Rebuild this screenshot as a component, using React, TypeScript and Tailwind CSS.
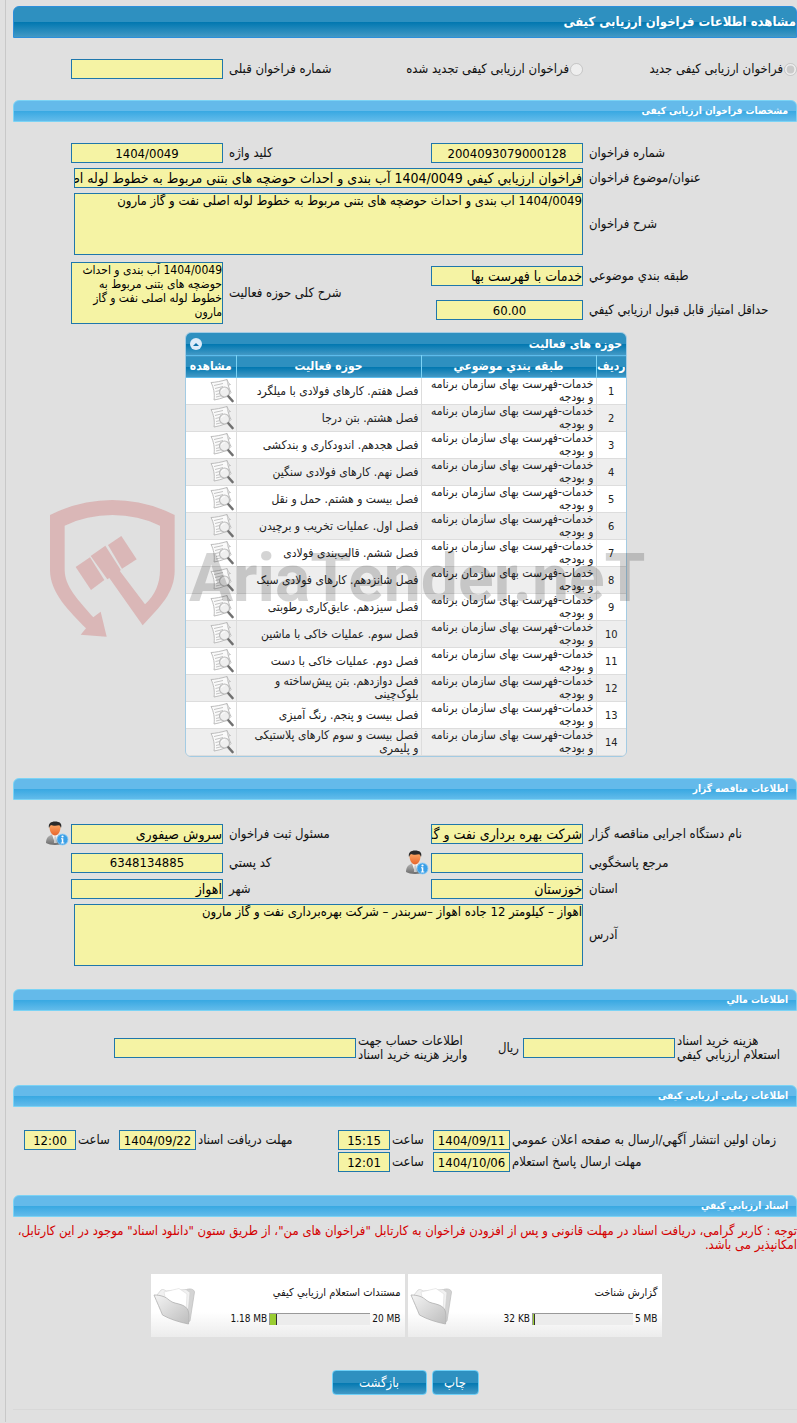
import React from 'react';

const TITLE_BG = 'bg-[linear-gradient(to_bottom,#2e90c0_0%,#2e90c0_50%,#0077b0_50%,#4399c5_100%)]';
const SECTION_BG = 'bg-[linear-gradient(to_bottom,#64baea_0%,#64baea_50%,#38a8e2_50%,#62bbea_100%)]';
const FIELD = 'block border border-[#1f77ab] bg-[#f5f3a4] text-black outline-none';

interface Activity {
  id: number;
  title: string;
}

const activities: Activity[] = [
  { id: 1, title: 'فصل هفتم. کارهای فولادی با میلگرد' },
  { id: 2, title: 'فصل هشتم. بتن درجا' },
  { id: 3, title: 'فصل هجدهم. اندودکاری و بندکشی' },
  { id: 4, title: 'فصل نهم. کارهای فولادی سنگین' },
  { id: 5, title: 'فصل بیست و هشتم. حمل و نقل' },
  { id: 6, title: 'فصل اول. عملیات تخریب و برچیدن' },
  { id: 7, title: 'فصل ششم. قالب‌بندی فولادی' },
  { id: 8, title: 'فصل شانزدهم. کارهای فولادی سبک' },
  { id: 9, title: 'فصل سیزدهم. عایق‌کاری رطوبتی' },
  { id: 10, title: 'فصل سوم. عملیات خاکی با ماشین' },
  { id: 11, title: 'فصل دوم. عملیات خاکی با دست' },
  { id: 12, title: 'فصل دوازدهم. بتن پیش‌ساخته و بلوک‌چینی' },
  { id: 13, title: 'فصل بیست و پنجم. رنگ آمیزی' },
  { id: 14, title: 'فصل بیست و سوم کارهای پلاستیکی و پلیمری' },
];

const DocumentIcon = () => (
  <svg width="24" height="24" viewBox="0 0 24 24" fill="none">
    <path d="M1 3.500C5 3.500 12 2 17 .5c.5 4 2 9 4 13-3 4-9 6-17 7.500C5 15 3.500 8 1 3.500Z" fill="#fafafa" stroke="#b5b5b5" strokeWidth=".9" />
    <path d="M17 .5c1 2 1.500 4 3.500 5l-2.500.8" fill="#ddd" stroke="#b5b5b5" strokeWidth=".7" />
    <path d="M4 6.500l9-2M5 9.500l8-2M5.500 12.500l5-1.200M6 15.500l4-1M6 18l5-1.200" stroke="#c4c4c4" strokeWidth="1" />
    <circle cx="14.500" cy="13" r="5" fill="#ececec" fillOpacity=".85" stroke="#bdbdbd" strokeWidth="1.200" />
    <path d="M11.500 12c.5-1.800 2-2.500 3.500-2.300" stroke="#fff" />
    <path d="M18.500 17.500l4 4.500" stroke="#707070" strokeWidth="2.600" strokeLinecap="round" />
  </svg>
);

const UserIcon = () => (
  <svg width="24" height="25" viewBox="0 0 24 25">
    <defs>
      <linearGradient id="face" x1="0" y1="0" x2="0" y2="1">
        <stop offset="0" stopColor="#ffb672" />
        <stop offset="1" stopColor="#e8642a" />
      </linearGradient>
      <linearGradient id="suit" x1="0" y1="0" x2="0" y2="1">
        <stop offset="0" stopColor="#b5b5b5" />
        <stop offset="1" stopColor="#6d6d6d" />
      </linearGradient>
    </defs>
    <path d="M1 22c0-4 1.500-7 6-8.500h6c4.500 1.500 6 4.500 6 8.500-4 2.500-14 2.500-18 0Z" fill="url(#suit)" />
    <path d="M7 13.500 10 22l3.500-8.500Z" fill="#f3f3f3" />
    <path d="M9.500 15.500h1.600l.8 6.500h-3Z" fill="#c9c9c9" />
    <path d="M4.500 6C4.500 2 7 1 10 1s5.500 1.500 5.500 5c0 4.500-2.500 8.500-5.500 8.500S4.500 10.500 4.500 6Z" fill="url(#face)" />
    <path d="M4 7C3 2.500 6 .5 10 .5c4.500 0 7.500 2 6 6.500-.5-1.500-1-2.500-2-2.800-3 .8-6.500.5-8-.2C5 4.800 4.500 5.800 4 7Z" fill="#2b2b2b" />
    <circle cx="17.500" cy="18.500" r="5.500" fill="#3b9fe6" stroke="#8fcdf6" strokeWidth=".8" />
    <circle cx="17.500" cy="15.500" r="1.100" fill="#fff" />
    <path d="M16 17.300h2.300v4.200h1v1h-3.500v-1h1v-3.200H16Z" fill="#fff" />
  </svg>
);

const FolderIcon = () => (
  <svg width="44" height="40" viewBox="0 0 44 40">
    <defs>
      <linearGradient id="folder" x1="0" y1="0" x2="1" y2="1">
        <stop offset="0" stopColor="#f4f4f4" />
        <stop offset="1" stopColor="#bdbdbd" />
      </linearGradient>
    </defs>
    <path d="M32 4c5-2 9-1 9.500 2L37 35l-4 2Z" fill="#d4d4d4" stroke="#bbb" strokeWidth=".7" />
    <path d="M4 9 8 4c2-1 3-.5 5 1l20-1.500 4 3L35 28 12 22Z" fill="#f1f1f1" stroke="#cfcfcf" strokeWidth=".7" />
    <path d="M11 6 26 2.500 34 8l-1 18L14 20Z" fill="#fff" stroke="#dcdcdc" strokeWidth=".6" />
    <path d="M1 9c7 0 12 2 15 5 4 3.500 8 3 13 5 6 2.500 8 6 6.500 19-10-2-19-5-26-9C7 23 4 16 1 9Z" fill="url(#folder)" stroke="#b0b0b0" strokeWidth=".8" />
  </svg>
);

const ShieldLogo = () => (
  <svg viewBox="60 30 375 411" className="h-[137px] w-[125px]" fill="#c83c3c" fillOpacity=".25">
    <path d="M60 75Q150 30 247 30Q345 30 434 75V240C434 310 390 350 338 406L238 264L232 268L182 198L226 167L272 239L270 244L345 343C375 315 390 280 390 240V107Q325 75 247 75Q170 75 104 107V240C104 290 145 330 190 382L212 365L230 440L152 434L168 415C120 365 60 310 60 240Z" />
    <path d="M137 231 180 202 223 270 183 300Z" />
    <path d="M234 165 274 138 320 208 276 236Z" />
  </svg>
);

interface FieldProps {
  id: string;
  label: string;
  value?: string;
  center?: boolean;
  labelWidth: string;
  width?: string;
}

const Field: React.FC<FieldProps> = ({ id, label, value = '', center, labelWidth, width = 'w-[152px]' }) => (
  <>
    <label htmlFor={id} className={`${labelWidth} shrink-0 pl-1.5 text-left`}>{label}</label>
    <input id={id} readOnly defaultValue={value} className={`${FIELD} ${width} h-5 shrink-0 ${center ? 'text-center text-[13px]' : 'text-[14px]'}`} />
  </>
);

interface AreaProps {
  id: string;
  label: string;
  value: string;
  labelWidth: string;
  width: string;
  textSize?: string;
}

const Area: React.FC<AreaProps> = ({ id, label, value, labelWidth, width, textSize = 'text-[13px]' }) => (
  <>
    <label htmlFor={id} className={`${labelWidth} shrink-0 pl-1.5 text-left`}>{label}</label>
    <textarea id={id} readOnly defaultValue={value} className={`${FIELD} ${width} ${textSize} h-[62px] shrink-0 resize-none overflow-hidden leading-[14px]`} />
  </>
);

const Section: React.FC<{ title: string; children: React.ReactNode }> = ({ title, children }) => (
  <section>
    <h2 className={`${SECTION_BG} h-[22px] rounded-t-md border border-[#7bd3f5] px-2 text-[10px] leading-5 font-bold text-white`}>{title}</h2>
    {children}
  </section>
);

const ActivityTable = () => (
  <div className="mx-auto mt-2 w-[442px] overflow-hidden rounded-md border border-[#a3cbe3]">
    <div className={`${TITLE_BG} flex h-[22px] items-center justify-between px-1 text-[12px] font-bold text-white`}>
      <span>حوزه های فعالیت</span>
      <button type="button" aria-label="بستن" className="flex size-3 items-center justify-center rounded-full bg-[#dcebf8]">
        <svg width="6" height="3" viewBox="0 0 8 4"><path d="M0 4 4 0l4 4Z" fill="#0b71aa" /></svg>
      </button>
    </div>
    <table className="w-full table-fixed border-collapse text-[12px] leading-[13px] text-[#222]">
      <thead>
        <tr className={`${TITLE_BG} h-[22px] border-t border-b border-[#5cbcec] text-white`}>
          <th className="w-[30px] p-0">ردیف</th>
          <th className="w-[175px] border-r border-[#7bd3f5] p-0">طبقه بندي موضوعي</th>
          <th className="w-[185px] border-r border-[#7bd3f5] p-0">حوزه فعالیت</th>
          <th className="border-r border-[#7bd3f5] p-0">مشاهده</th>
        </tr>
      </thead>
      <tbody>
        {activities.map((item) => (
          <tr key={item.id} className="h-[27px] border-b border-[#ddd] bg-white even:bg-[#eee]">
            <td className="p-0 text-center text-[11px]">{item.id}</td>
            <td className="border-r border-[#ddd] py-0 pr-0.5 pl-2">خدمات-فهرست بهای سازمان برنامه و بودجه</td>
            <td className="border-r border-[#ddd] py-0 pr-0.5 pl-3">{item.title}</td>
            <td className="border-r border-[#ddd] p-0">
              <button type="button" aria-label="مشاهده" className="mr-0.5 block"><DocumentIcon /></button>
            </td>
          </tr>
        ))}
      </tbody>
    </table>
  </div>
);

interface FileCardProps {
  title: string;
  used: string;
  total: string;
  percent: number;
}

const FileCard: React.FC<FileCardProps> = ({ title, used, total, percent }) => (
  <div className="flex h-[63px] w-[254px] items-center justify-between bg-[linear-gradient(to_bottom,#fff_60%,#ececec)] pr-1 pl-0.5">
    <div className="flex flex-col gap-3 text-[11px] leading-[14px]">
      <span>{title}</span>
      <div dir="ltr" className="flex items-center gap-0.5 text-[10px]">
        <span className="w-[60px] text-right">{used}</span>
        <div className="h-3 w-[101px] border-t border-l border-[#999] bg-[#ececec]">
          <div className="h-full border-r border-[#333] bg-[#9acd32]" style={{ width: `${percent}%` }} />
        </div>
        <span>{total}</span>
      </div>
    </div>
    <FolderIcon />
  </div>
);

interface DateFieldProps {
  id: string;
  label: string;
  date: string;
  time: string;
  labelWidth: string;
}

const DateField: React.FC<DateFieldProps> = ({ id, label, date, time, labelWidth }) => (
  <div className="flex items-center">
    <label htmlFor={`${id}-date`} className={`${labelWidth} pl-0.5 text-left`}>{label}</label>
    <input id={`${id}-date`} readOnly defaultValue={date} className={`${FIELD} h-5 w-[77px] text-center text-[13px]`} />
    <label htmlFor={`${id}-time`} className="w-[43px] pl-0.5 text-left">ساعت</label>
    <input id={`${id}-time`} readOnly defaultValue={time} className={`${FIELD} h-5 w-[52px] text-center text-[13px]`} />
  </div>
);

const BUTTON = 'h-[25px] rounded border border-[#6fd0f7] text-white';

export default function App() {
  return (
    <div dir="rtl" lang="fa" className="min-h-screen overflow-hidden bg-[#e0e0e0] font-['DejaVu_Sans_Condensed','DejaVu_Sans',sans-serif] text-[13px] leading-[14px] text-[#111]">
      <main className="ml-[5px] border-l border-[#c8c8c8] pt-1.5 pb-3 pl-[7px]">
        <h1 className={`${TITLE_BG} h-8 rounded-t-md border border-[#2c8fdb] leading-[30px] font-bold text-white`}>مشاهده اطلاعات فراخوان ارزیابی کیفی</h1>

        <div className="my-[21px] flex items-center">
          <label className="flex w-[214px] items-center gap-px">
            <input type="radio" name="kind" disabled defaultChecked className="size-[13px]" />
            فراخوان ارزیابی کیفی جدید
          </label>
          <label className="flex w-[208px] items-center gap-px">
            <input type="radio" name="kind" disabled className="size-[13px]" />
            فراخوان ارزیابی کیفی تجدید شده
          </label>
          <Field id="prev" label="شماره فراخوان قبلی" labelWidth="w-[152px]" />
        </div>

        <Section title="مشخصات فراخوان ارزیابی کیفی">
          <div className="mt-[21px] flex flex-col gap-[5px]">
            <div className="flex items-center">
              <Field id="number" label="شماره فراخوان" value="2004093079000128" center labelWidth="w-[214px]" />
              <Field id="keyword" label="کلید واژه" value="1404/0049" center labelWidth="w-[208px]" />
            </div>
            <div className="flex items-center">
              <Field id="subject" label="عنوان/موضوع فراخوان" value="فراخوان ارزيابي کيفي 1404/0049 آب بندی و احداث حوضچه های بتنی مربوط به خطوط لوله اصلی نفت و گاز مارون" labelWidth="w-[214px]" width="w-[509px]" />
            </div>
            <div className="flex items-center">
              <Area id="description" label="شرح فراخوان" value="1404/0049 آب بندی و احداث حوضچه های بتنی مربوط به خطوط لوله اصلی نفت و گاز مارون" labelWidth="w-[214px]" width="w-[509px]" />
            </div>
          </div>
          <div className="mt-[7px] flex items-center">
            <div className="flex w-[366px] shrink-0 flex-col gap-3.5">
              <div className="flex items-center">
                <Field id="category" label="طبقه بندي موضوعي" value="خدمات با فهرست بها" labelWidth="w-[214px]" />
              </div>
              <div className="flex items-center">
                <Field id="score" label="حداقل امتیاز قابل قبول ارزيابي کيفي" value="60.00" center labelWidth="w-[214px]" width="w-[147px]" />
              </div>
            </div>
            <Area id="scope" label="شرح کلی حوزه فعالیت" value="1404/0049 آب بندی و احداث حوضچه های بتنی مربوط به خطوط لوله اصلی نفت و گاز مارون" labelWidth="w-[208px]" width="w-[152px]" textSize="text-[12px]" />
          </div>
          <div className="relative mb-[21px] pl-0.5">
            <ActivityTable />
            <div dir="ltr" className="pointer-events-none absolute top-[168px] left-[37px] flex items-start gap-3.5">
              <ShieldLogo />
              <span className="mt-10 font-['Roboto',sans-serif] text-[66px] leading-[78px] font-bold text-black/17">AriaTender.neT</span>
            </div>
          </div>
        </Section>

        <Section title="اطلاعات مناقصه گزار">
          <div className="mt-[21px] mb-[23px]">
            <div className="flex items-center">
              <Field id="agency" label="نام دستگاه اجرایی مناقصه گزار" value="شرکت بهره برداری نفت و گاز مارون" labelWidth="w-[214px]" />
              <Field id="registrar" label="مسئول ثبت فراخوان" value="سروش صیفوری" labelWidth="w-[208px]" />
              <button type="button" aria-label="اطلاعات مسئول ثبت" className="mr-0.5"><UserIcon /></button>
            </div>
            <div className="mt-1 flex items-center">
              <Field id="contact" label="مرجع پاسخگويي" labelWidth="w-[214px]" />
              <button type="button" aria-label="اطلاعات مرجع پاسخگويي" className="mr-0.5"><UserIcon /></button>
              <Field id="postcode" label="کد پستي" value="6348134885" center labelWidth="w-[182px]" />
            </div>
            <div className="mt-1 flex items-center">
              <Field id="province" label="استان" value="خوزستان" labelWidth="w-[214px]" />
              <Field id="city" label="شهر" value="اهواز" labelWidth="w-[208px]" />
            </div>
            <div className="mt-[5px] flex items-center">
              <Area id="address" label="آدرس" value="اهواز – کیلومتر 12 جاده اهواز –سربندر – شرکت بهره‌برداری نفت و گاز مارون" labelWidth="w-[214px]" width="w-[509px]" />
            </div>
          </div>
        </Section>

        <Section title="اطلاعات مالي">
          <div className="my-[23px] flex items-center">
            <label htmlFor="cost" className="w-[122px] pl-0.5 text-left whitespace-nowrap">هزینه خرید اسناد<br />استعلام ارزيابي کيفي</label>
            <input id="cost" readOnly className={`${FIELD} h-5 w-[152px] text-[13px]`} />
            <span className="w-[54px] pr-1">ریال</span>
            <label htmlFor="account" className="w-[113px] pl-0.5 text-left whitespace-nowrap">اطلاعات حساب جهت<br />واریز هزینه خرید اسناد</label>
            <input id="account" readOnly className={`${FIELD} h-5 w-[242px] text-[13px]`} />
          </div>
        </Section>

        <Section title="اطلاعات زمانی ارزیابی کیفی">
          <div className="my-[23px] flex flex-col gap-0.5">
            <div className="flex">
              <DateField id="publish" label="زمان اولین انتشار آگهي/ارسال به صفحه اعلان عمومي" date="1404/09/11" time="15:15" labelWidth="w-[287px]" />
              <DateField id="receive" label="مهلت دریافت اسناد" date="1404/09/22" time="12:00" labelWidth="w-[142px]" />
            </div>
            <DateField id="reply" label="مهلت ارسال پاسخ استعلام" date="1404/10/06" time="12:01" labelWidth="w-[287px]" />
          </div>
        </Section>

        <Section title="اسناد ارزيابي کيفي">
          <p className="mt-[7px] text-[#d40000]">توجه : کاربر گرامی، دریافت اسناد در مهلت قانونی و پس از افزودن فراخوان به کارتابل "فراخوان های من"، از طریق ستون "دانلود اسناد" موجود در این کارتابل، امکانپذیر می باشد.</p>
          <div className="mt-[22px] flex justify-center gap-[3px] pl-0.5">
            <FileCard title="گزارش شناخت" used="32 KB" total="5 MB" percent={2} />
            <FileCard title="مستندات استعلام ارزيابي کيفي" used="1.18 MB" total="20 MB" percent={7} />
          </div>
          <div className="mt-[33px] flex justify-center gap-[5px]">
            <button type="button" className={`${TITLE_BG} ${BUTTON} w-[47px]`}>چاپ</button>
            <button type="button" className={`${TITLE_BG} ${BUTTON} w-[95px]`}>بازگشت</button>
          </div>
        </Section>
        <hr className="mt-3.5 border-[#d8d8d8]" />
      </main>
    </div>
  );
}
